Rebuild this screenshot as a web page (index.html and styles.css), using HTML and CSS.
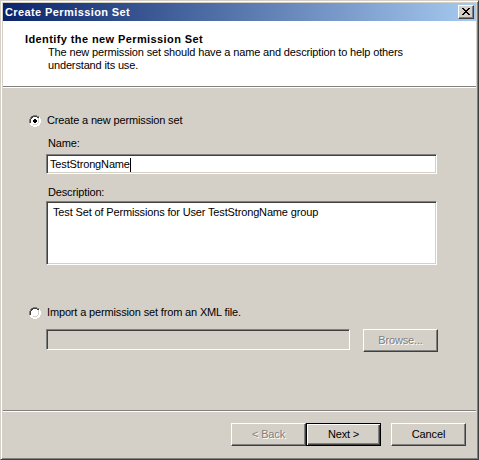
FILE: index.html
```html
<!DOCTYPE html>
<html>
<head>
<meta charset="utf-8">
<link rel="stylesheet" href="styles.css">
</head>
<body>
<div class="window">
  <div class="titlebar">
    <span class="title">Create Permission Set</span>
    <div class="close">
      <svg width="8" height="7" viewBox="0 0 8 7"><path d="M0 0h2v1h1v1h2v-1h1v-1h2v1h-1v1h-1v1h-1v1h1v1h1v1h1v1h-2v-1h-1v-1h-2v1h-1v1h-2v-1h1v-1h1v-1h1v-1h-1v-1h-1v-1h-1z" fill="#000"/></svg>
    </div>
  </div>
  <div class="header">
    <div class="h-title">Identify the new Permission Set</div>
    <div class="h-sub">The new permission set should have a name and description to help others<br>understand its use.</div>
  </div>
  <div class="sep"></div>
  <div class="content">
    <div class="radio-row">
      <svg class="radio" width="12" height="12" viewBox="0 0 12 12">
        <path d="M4 0h4v1h2v1h1v2h1v4h-1v2h-1v1h-2v1h-4v-1h-2v-1h-1v-2h-1v-4h1v-2h1v-1h2z" fill="#fff"/>
        <path d="M4 0h4v1h2v1h-2v-1h-4v1h-2v2h-1v4h-1v-4h1v-2h1v-1h2z" fill="#808080"/>
        <path d="M4 1h4v1h2v1h-2v-1h-4v1h-1v1h-1v4h-1v-4h1v-2h1v-1h1z" fill="#404040"/>
        <path d="M10 2h1v2h1v4h-1v2h-1v1h-2v1h-4v-1h4v-1h2v-2h1v-4h-1z" fill="#fff"/>
        <path d="M9 3h1v5h-1v1h-1v1h-4v-1h4v-1h1z" fill="#d4d0c8"/>
        <path d="M5 4h2v1h1v2h-1v1h-2v-1h-1v-2h1z" fill="#000"/>
      </svg>
      <span>Create a new permission set</span>
    </div>
    <div class="indent">
      <div class="label l-name">Name:</div>
      <div class="field name">TestStrongName<span class="caret"></span></div>
      <div class="label l-desc">Description:</div>
      <div class="field desc">Test Set of Permissions for User TestStrongName group</div>
    </div>
    <div class="radio-row r2">
      <svg class="radio" width="12" height="12" viewBox="0 0 12 12">
        <path d="M4 0h4v1h2v1h1v2h1v4h-1v2h-1v1h-2v1h-4v-1h-2v-1h-1v-2h-1v-4h1v-2h1v-1h2z" fill="#fff"/>
        <path d="M4 0h4v1h2v1h-2v-1h-4v1h-2v2h-1v4h-1v-4h1v-2h1v-1h2z" fill="#808080"/>
        <path d="M4 1h4v1h2v1h-2v-1h-4v1h-1v1h-1v4h-1v-4h1v-2h1v-1h1z" fill="#404040"/>
        <path d="M10 2h1v2h1v4h-1v2h-1v1h-2v1h-4v-1h4v-1h2v-2h1v-4h-1z" fill="#fff"/>
        <path d="M9 3h1v5h-1v1h-1v1h-4v-1h4v-1h1z" fill="#d4d0c8"/>
      </svg>
      <span>Import a permission set from an XML file.</span>
    </div>
    <div class="file-row">
      <div class="field file"></div>
      <div class="btn disabled browse">Browse...</div>
    </div>
  </div>
  <div class="sep"></div>
  <div class="footer">
    <div class="btn disabled">&lt; Back</div>
    <div class="btn default">Next &gt;</div>
    <div class="btn cancel">Cancel</div>
  </div>
</div>
</body>
</html>
```

FILE: styles.css
```css
html, body {
  margin: 0;
  padding: 0;
  background: #d4d0c8;
}
body {
  font-family: "Liberation Sans", Arial, sans-serif;
  font-size: 11px;
  line-height: 13px;
  letter-spacing: -0.15px;
  color: #000;
}
.window {
  width: 479px;
  height: 460px;
  box-sizing: border-box;
  background: #d4d0c8;
  border-top: 1px solid #d4d0c8;
  border-left: 1px solid #d4d0c8;
  border-right: 1px solid #404040;
  border-bottom: 1px solid #404040;
  box-shadow: inset 1px 1px 0 #fff, inset -1px -1px 0 #808080;
  padding: 2px;
  display: flex;
  flex-direction: column;
}
.titlebar {
  height: 18px;
  flex: none;
  background: linear-gradient(to right, #0a246a, #a6caf0);
  display: flex;
  align-items: center;
  justify-content: space-between;
  padding: 0 2px 0 2px;
}
.title {
  color: #fff;
  font-weight: bold;
  line-height: 18px;
  letter-spacing: 0.4px;
}
.close {
  width: 16px;
  height: 14px;
  box-sizing: border-box;
  background: #d4d0c8;
  border-top: 1px solid #fff;
  border-left: 1px solid #fff;
  border-right: 1px solid #404040;
  border-bottom: 1px solid #404040;
  box-shadow: inset -1px -1px 0 #808080;
  display: flex;
  align-items: center;
  justify-content: center;
  padding: 0 1px 1px 0;
}
.close svg { display: block; }
.header {
  height: 65px;
  flex: none;
  box-sizing: border-box;
  background: #fff;
  padding: 12px 0 0 22px;
}
.h-title {
  font-weight: bold;
  letter-spacing: 0.4px;
}
.h-sub {
  margin-left: 23px;
}
.sep {
  height: 2px;
  flex: none;
  box-sizing: border-box;
  border-top: 1px solid #808080;
  border-bottom: 1px solid #fff;
}
.content {
  height: 322px;
  flex: none;
  box-sizing: border-box;
  padding: 26px 0 0 26px;
}
.radio-row {
  display: flex;
  align-items: center;
  height: 13px;
  gap: 6px;
}
.radio { display: block; flex: none; }
.indent {
  margin-left: 17px;
}
.label {
  margin-left: 2px;
}
.l-name { margin-top: 10px; }
.l-desc { margin-top: 12px; }
.field {
  width: 391px;
  box-sizing: border-box;
  background: #fff;
  border-top: 1px solid #808080;
  border-left: 1px solid #808080;
  border-right: 1px solid #fff;
  border-bottom: 1px solid #fff;
  box-shadow: inset 1px 1px 0 #404040, inset -1px -1px 0 #d4d0c8;
}
.name {
  margin-top: 4px;
  height: 20px;
  padding: 3px 0 0 3px;
  display: flex;
  align-items: flex-start;
}
.caret {
  display: inline-block;
  width: 1px;
  height: 14px;
  background: #000;
  margin-left: 0;
}
.desc {
  margin-top: 2px;
  height: 64px;
  padding: 4px 0 0 6px;
}
.r2 { margin-top: 41px; }
.file-row {
  margin-top: 10px;
  margin-left: 17px;
  display: flex;
  align-items: flex-start;
  gap: 13px;
}
.file {
  width: 304px;
  height: 21px;
  background: #d4d0c8;
}
.btn {
  width: 75px;
  height: 23px;
  box-sizing: border-box;
  background: #d4d0c8;
  border-top: 1px solid #fff;
  border-left: 1px solid #fff;
  border-right: 1px solid #404040;
  border-bottom: 1px solid #404040;
  box-shadow: inset -1px -1px 0 #808080;
  display: flex;
  align-items: center;
  justify-content: center;
  padding-bottom: 1px;
}
.btn.disabled {
  color: #808080;
  text-shadow: 1px 1px 0 #fff;
}
.btn.default {
  border: 1px solid #000;
  box-shadow: inset 1px 1px 0 #fff, inset -1px -1px 0 #404040, inset -2px -2px 0 #808080;
}
.footer {
  flex: 1;
  display: flex;
  align-items: flex-start;
  padding: 11px 10px 0 0;
  justify-content: flex-end;
}
.cancel { margin-left: 10px; }
```
